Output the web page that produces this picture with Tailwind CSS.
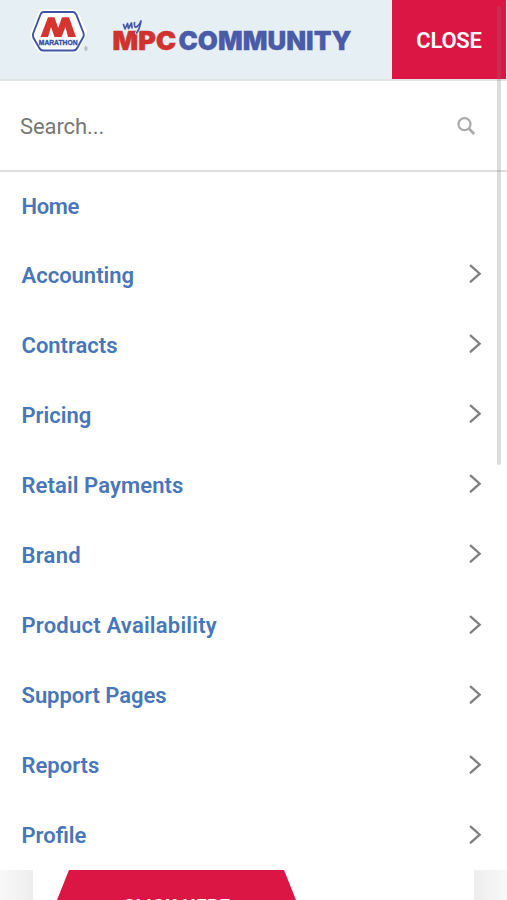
<!DOCTYPE html>
<html lang="en">
<head>
<meta charset="utf-8">
<title>myMPC Community</title>
<script src="https://cdn.jsdelivr.net/npm/@tailwindcss/browser@4"></script>
</head>
<body class="bg-white">
<svg class="hidden"><symbol id="chevron" viewBox="0 0 14 20"><path d="M1.700 1.700L10.700 9.700L1.700 17.700" fill="none" stroke="#808080" stroke-width="2.300" stroke-linecap="round"/></symbol></svg>
<div class="relative h-[900px] w-[507px] overflow-hidden bg-white font-['Roboto',sans-serif]">
  <header class="flex h-[81px] items-stretch border-b-2 border-[#dfe4e5] bg-[#e6eff4]">
    <svg class="h-[79px] w-[392px] shrink-0" viewBox="0 0 392 79">
      <path d="M42 9.500H74Q76.500 9.500 78 12L86 29Q88 32 86 35L80 48Q78 52.500 75 52.500H41Q38 52.500 36 48L31 38Q29.500 34 31 31L38 13Q40 9.500 42 9.500Z" fill="#fff"/>
      <path d="M43.500 12H73Q75 12 76.200 14.500L83.500 33Q84 35 83.500 36.500L77.500 47.500Q76 50.500 73.500 50.500H43Q40.500 50.500 39 47.500L33.300 37.500Q32.500 35 33.300 33L40.500 14.500Q41.500 12 43.500 12Z" fill="#fff" stroke="#4053a4" stroke-width="1.900"/>
      <path d="M40.500 37L48 17.200H54.500L58.200 28L62 17.200H69L76 37H68L65.500 27L61.500 37H54.500L51 27L48 37Z" fill="#d6352f"/>
      <text x="38.800" y="45.300" font-family="Liberation Sans, sans-serif" font-weight="700" font-size="7.600" textLength="38.700" lengthAdjust="spacingAndGlyphs" fill="#3c4da0" stroke="#3c4da0" stroke-width=".4">MARATHON</text>
      <text x="84.200" y="51" font-family="Liberation Sans, sans-serif" font-size="4.500" fill="#555c70">®</text>
      <g font-family="Inter, sans-serif" font-weight="900" font-size="25.500">
        <text x="112.500" y="50.200" textLength="63.500" lengthAdjust="spacingAndGlyphs" fill="#d0332f" stroke="#d0332f" stroke-width=".5">MPC</text>
        <text x="178.500" y="50.200" textLength="173" lengthAdjust="spacingAndGlyphs" fill="#4a5ba8" stroke="#4a5ba8" stroke-width=".3">COMMUNITY</text>
      </g>
      <g fill="none" stroke-linecap="round" stroke-linejoin="round">
        <path d="M123.500 24.500L125 29L127.500 23.500L128.500 28.500L131.500 23L132 28M134.500 22.500Q134 28 136.500 27Q139.500 25 141 21Q139.500 29.500 136.500 33" stroke="#e6eff4" stroke-width="3"/>
        <path d="M123.500 24.500L125 29L127.500 23.500L128.500 28.500L131.500 23L132 28M134.500 22.500Q134 28 136.500 27Q139.500 25 141 21Q139.500 29.500 136.500 33" stroke="#4657a7" stroke-width="1.700"/>
      </g>
    </svg>
    <button class="flex w-[114px] items-center justify-center bg-[#dc1644] pt-[1px] text-[22px] font-semibold text-white"><span class="tracking-[-0.2px]">CLOSE</span></button>
  </header>
  <div class="flex h-[91px] items-center justify-between border-b-2 border-[#dedede] pr-[31px] pl-5">
    <span class="pt-px text-[22px] tracking-[-0.1px] text-[#777]">Search...</span>
    <svg class="h-[20px] w-[20px]" viewBox="0 0 20 20" fill="none" stroke="#aaa" stroke-width="2.200"><circle cx="8.500" cy="8.200" r="6"/><path d="M12.800 12.500L18.200 18" stroke-width="2.700"/></svg>
  </div>
  <nav class="flex h-[698px] flex-col pr-[24px] pl-[21.500px] text-[22px] leading-[28px] font-semibold text-[#4777b8]">
    <a class="flex h-[67px] items-center pt-[3px]"><span class="tracking-[-0.4px]">Home</span></a>
    <a class="flex h-[70.1px] items-center justify-between"><span class="pt-[3px] tracking-[0px]">Accounting</span><svg class="h-5 w-[14px]"><use href="#chevron"/></svg></a>
    <a class="flex h-[70.1px] items-center justify-between"><span class="pt-[3px] tracking-[0px]">Contracts</span><svg class="h-5 w-[14px]"><use href="#chevron"/></svg></a>
    <a class="flex h-[70.1px] items-center justify-between"><span class="pt-[3px] tracking-[0px]">Pricing</span><svg class="h-5 w-[14px]"><use href="#chevron"/></svg></a>
    <a class="flex h-[70.1px] items-center justify-between"><span class="pt-[3px] tracking-[0.1px]">Retail Payments</span><svg class="h-5 w-[14px]"><use href="#chevron"/></svg></a>
    <a class="flex h-[70.1px] items-center justify-between"><span class="pt-[3px] tracking-[0.3px]">Brand</span><svg class="h-5 w-[14px]"><use href="#chevron"/></svg></a>
    <a class="flex h-[70.1px] items-center justify-between"><span class="pt-[3px] tracking-[0.22px]">Product Availability</span><svg class="h-5 w-[14px]"><use href="#chevron"/></svg></a>
    <a class="flex h-[70.1px] items-center justify-between"><span class="pt-[3px] tracking-[-0.05px]">Support Pages</span><svg class="h-5 w-[14px]"><use href="#chevron"/></svg></a>
    <a class="flex h-[70.1px] items-center justify-between"><span class="pt-[3px] tracking-[0px]">Reports</span><svg class="h-5 w-[14px]"><use href="#chevron"/></svg></a>
    <a class="flex h-[70.1px] items-center justify-between"><span class="pt-[3px] tracking-[0px]">Profile</span><svg class="h-5 w-[14px]"><use href="#chevron"/></svg></a>
  </nav>
  <section class="flex h-[30px] justify-between">
    <div class="w-[33px] bg-linear-to-r from-[#f8f8f8] to-[#eeeeee]"></div>
    <svg class="h-[30px] w-[441px]" viewBox="33 870 441 30"><path d="M69 870H284L296 900H57Z" fill="#dc1644"/><text x="123" y="911.500" font-family="Roboto, sans-serif" font-weight="700" font-size="18.500" textLength="107" fill="#fff">CLICK HERE</text></svg>
    <div class="w-[33px] bg-linear-to-r from-[#eeeeee] to-[#f8f8f8]"></div>
  </section>
  <div class="absolute top-[6px] left-[497px] h-[459px] w-[4px] rounded-full bg-[#777]/25"></div>
</div>
</body>
</html>
